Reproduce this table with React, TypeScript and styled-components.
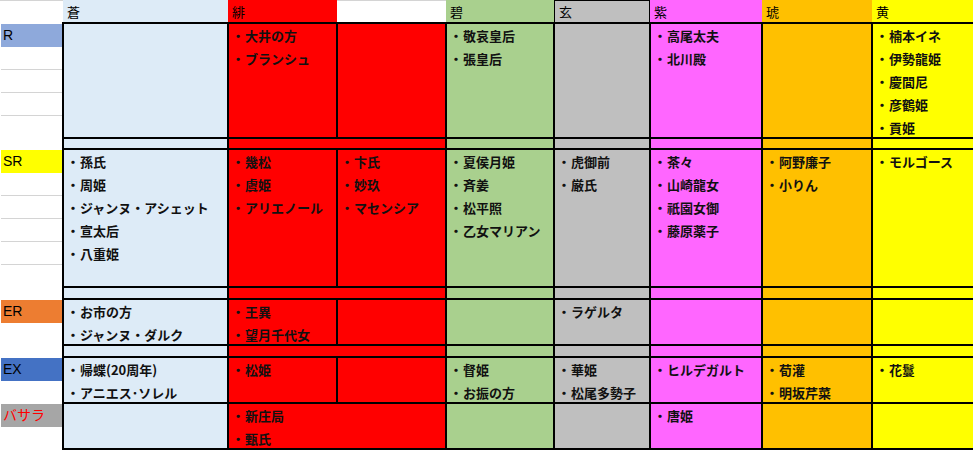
import styled, { createGlobalStyle } from "styled-components";

const GlobalStyle = createGlobalStyle`
  body {
    margin: 0;
    background: #ffffff;
    font-family: "Noto Sans CJK JP", "Noto Sans", sans-serif;
  }
`;

const C = {
  ao: "#DDEBF7",
  hi: "#FF0000",
  heki: "#A9D08E",
  gen: "#BFBFBF",
  shi: "#FF66FF",
  ko: "#FFC000",
  ki: "#FFFF00",
};

type Cell = { bg: string; items?: string[]; span?: number };
type Label = { text: string; bg: string; color?: string };
type Row = { height: number; label?: Label; cells: Cell[] };

const spacer = (height: number): Row => ({
  height,
  cells: [
    { bg: C.ao },
    { bg: C.hi, span: 2 },
    { bg: C.heki },
    { bg: C.gen },
    { bg: C.shi },
    { bg: C.ko },
    { bg: C.ki },
  ],
});

const rows: Row[] = [
  {
    height: 113,
    label: { text: "R", bg: "#8EA9DB" },
    cells: [
      { bg: C.ao },
      { bg: C.hi, items: ["大井の方", "ブランシュ"] },
      { bg: C.hi },
      { bg: C.heki, items: ["敬哀皇后", "張皇后"] },
      { bg: C.gen },
      { bg: C.shi, items: ["高尾太夫", "北川殿"] },
      { bg: C.ko },
      { bg: C.ki, items: ["楠本イネ", "伊勢龍姫", "慶閭尼", "彦鶴姫", "貢姫"] },
    ],
  },
  spacer(9),
  {
    height: 136,
    label: { text: "SR", bg: "#FFFF00" },
    cells: [
      { bg: C.ao, items: ["孫氏", "周姫", "ジャンヌ・アシェット", "宣太后", "八重姫"] },
      { bg: C.hi, items: ["幾松", "虞姫", "アリエノール"] },
      { bg: C.hi, items: ["卞氏", "妙玖", "マセンシア"] },
      { bg: C.heki, items: ["夏侯月姫", "斉姜", "松平照", "乙女マリアン"] },
      { bg: C.gen, items: ["虎御前", "厳氏"] },
      { bg: C.shi, items: ["茶々", "山崎龍女", "祇園女御", "藤原薬子"] },
      { bg: C.ko, items: ["阿野廉子", "小りん"] },
      { bg: C.ki, items: ["モルゴース"] },
    ],
  },
  spacer(10),
  {
    height: 44,
    label: { text: "ER", bg: "#ED7D31" },
    cells: [
      { bg: C.ao, items: ["お市の方", "ジャンヌ・ダルク"] },
      { bg: C.hi, items: ["王異", "望月千代女"] },
      { bg: C.hi },
      { bg: C.heki },
      { bg: C.gen, items: ["ラゲルタ"] },
      { bg: C.shi },
      { bg: C.ko },
      { bg: C.ki },
    ],
  },
  spacer(10),
  {
    height: 44,
    label: { text: "EX", bg: "#4472C4" },
    cells: [
      { bg: C.ao, items: ["帰蝶(20周年)", "アニエス･ソレル"] },
      { bg: C.hi, items: ["松姫"] },
      { bg: C.hi },
      { bg: C.heki, items: ["督姫", "お振の方"] },
      { bg: C.gen, items: ["華姫", "松尾多勢子"] },
      { bg: C.shi, items: ["ヒルデガルト"] },
      { bg: C.ko, items: ["荀灌", "明坂芹菜"] },
      { bg: C.ki, items: ["花鬘"] },
    ],
  },
  {
    height: 44,
    label: { text: "バサラ", bg: "#A6A6A6", color: "#FF0000" },
    cells: [
      { bg: C.ao },
      { bg: C.hi, span: 2, items: ["新庄局", "甄氏"] },
      { bg: C.heki },
      { bg: C.gen },
      { bg: C.shi, items: ["唐姫"] },
      { bg: C.ko },
      { bg: C.ki },
    ],
  },
];

const headers = [
  { text: "", bg: "#ffffff", top: true },
  { text: "蒼", bg: C.ao },
  { text: "緋", bg: C.hi },
  { text: "", bg: "#ffffff", top: true },
  { text: "碧", bg: C.heki },
  { text: "玄", bg: C.gen, boxed: true },
  { text: "紫", bg: C.shi },
  { text: "琥", bg: C.ko },
  { text: "黄", bg: C.ki },
];

const rowTemplate = rows.map((r) => `${r.height}px`).join(" ");

const Sheet = styled.div`
  width: 973px;
  height: 450px;
  overflow: hidden;
  display: flex;
  flex-direction: column;
`;

const HeaderRow = styled.div`
  display: grid;
  grid-template-columns: 63px 165px 109px 109px 108px 96px 112px 110px 1fr;
  height: 22px;
`;

const HeadCell = styled.div<{ $bg: string; $top?: boolean; $boxed?: boolean }>`
  background: ${(p) => p.$bg};
  border-top: 1px solid ${(p) => (p.$boxed ? "#000" : p.$top ? "#d4d4d4" : p.$bg)};
  border-left: ${(p) => (p.$boxed ? "1px solid #000" : "none")};
  border-right: ${(p) => (p.$boxed ? "1px solid #000" : "none")};
  box-sizing: border-box;
  padding: 1px 0 0 4px;
  font-size: 13px;
  line-height: 20px;
  color: #000;
`;

const Body = styled.div`
  display: flex;
  align-items: flex-start;
`;

const LabelColumn = styled.div<{ $rows: string }>`
  width: 62px;
  flex: none;
  display: grid;
  grid-template-rows: ${(p) => p.$rows};
  row-gap: 2px;
  padding-top: 2px;
`;

const LabelBlock = styled.div`
  overflow: hidden;
  display: flex;
  flex-direction: column;
`;

const LabelLine = styled.div<{ $bg?: string; $color?: string }>`
  flex: none;
  height: 23px;
  box-sizing: border-box;
  margin-left: 1px;
  background: ${(p) => p.$bg || "#ffffff"};
  border-bottom: 1px solid ${(p) => (p.$bg ? p.$bg : "#d4d4d4")};
  color: ${(p) => p.$color || "#000"};
  padding-left: 2px;
  font-family: "Liberation Sans", "Noto Sans CJK JP", sans-serif;
  font-size: 14px;
  line-height: 23px;
`;

const Table = styled.div<{ $rows: string }>`
  flex: 1;
  display: grid;
  grid-template-columns: 163px 107px 107px 106px 94px 110px 108px 1fr;
  grid-template-rows: ${(p) => p.$rows};
  gap: 2px;
  padding: 2px 0 2px 2px;
  background: #000;
`;

const BodyCell = styled.div<{ $bg: string; $span?: number }>`
  background: ${(p) => p.$bg};
  grid-column: span ${(p) => p.$span || 1};
  display: flex;
  flex-direction: column;
  overflow: hidden;
`;

const Item = styled.div`
  display: flex;
  align-items: center;
  height: 23px;
  flex: none;
  padding-left: 2px;
  font-size: 13px;
  font-weight: 700;
  color: #111;
  white-space: nowrap;
`;

const Bullet = styled.span`
  width: 14px;
  text-align: center;
  flex: none;
`;

export default function App() {
  return (
    <Sheet>
      <GlobalStyle />
      <HeaderRow>
        {headers.map((h, i) => (
          <HeadCell key={i} $bg={h.bg} $top={h.top} $boxed={h.boxed}>
            {h.text}
          </HeadCell>
        ))}
      </HeaderRow>
      <Body>
        <LabelColumn $rows={rowTemplate}>
          {rows.map((r, i) => (
            <LabelBlock key={i}>
              {r.label &&
                Array.from({ length: Math.ceil(r.height / 23) }).map((_, j) =>
                  j === 0 ? (
                    <LabelLine key={j} $bg={r.label!.bg} $color={r.label!.color}>
                      {r.label!.text}
                    </LabelLine>
                  ) : (
                    <LabelLine key={j} />
                  )
                )}
            </LabelBlock>
          ))}
        </LabelColumn>
        <Table $rows={rowTemplate}>
          {rows.map((r, i) =>
            r.cells.map((c, j) => (
              <BodyCell key={`${i}-${j}`} $bg={c.bg} $span={c.span}>
                {c.items?.map((name) => (
                  <Item key={name}>
                    <Bullet>・</Bullet>
                    {name}
                  </Item>
                ))}
              </BodyCell>
            ))
          )}
        </Table>
      </Body>
    </Sheet>
  );
}
